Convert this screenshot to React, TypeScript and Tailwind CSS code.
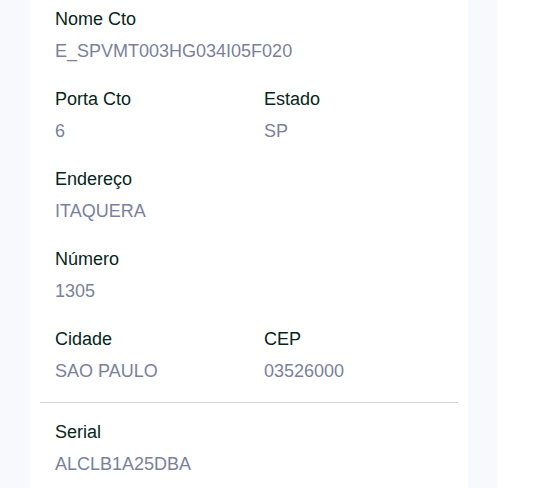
const rows: { label: string; value: string }[][] = [
  [{ label: "Nome Cto", value: "E_SPVMT003HG034I05F020" }],
  [
    { label: "Porta Cto", value: "6" },
    { label: "Estado", value: "SP" },
  ],
  [{ label: "Endereço", value: "ITAQUERA" }],
  [{ label: "Número", value: "1305" }],
  [
    { label: "Cidade", value: "SAO PAULO" },
    { label: "CEP", value: "03526000" },
  ],
];

function Field({ label, value }: { label: string; value: string }) {
  return (
    <div>
      <p className="text-[18px] leading-7 text-[#06261a]">{label}</p>
      <p className="mt-1 text-[18px] leading-7 text-[#7b7f9e]">{value}</p>
    </div>
  );
}

export default function App() {
  return (
    <div
      className="flex h-[488px] w-full bg-white"
      style={{ fontFamily: '"Liberation Sans", Arial, sans-serif' }}
    >
      <div className="w-[30px] shrink-0 bg-[#f8f9fc]" />
      <div className="w-[438px] shrink-0 bg-white pt-[5px]">
        <div className="flex flex-col gap-5 px-[25px]">
          {rows.map((row, i) => (
            <div key={i} className="grid grid-cols-[209px_1fr]">
              {row.map((f) => (
                <Field key={f.label} {...f} />
              ))}
            </div>
          ))}
        </div>
        <div className="mx-[10px] mt-[17px] h-px bg-[#d3d3dc]" />
        <div className="px-[25px] pt-[15px]">
          <Field label="Serial" value="ALCLB1A25DBA" />
        </div>
      </div>
      <div className="w-[29px] shrink-0 bg-[#f8f9fc]" />
      <div className="flex-1 bg-white" />
    </div>
  );
}
